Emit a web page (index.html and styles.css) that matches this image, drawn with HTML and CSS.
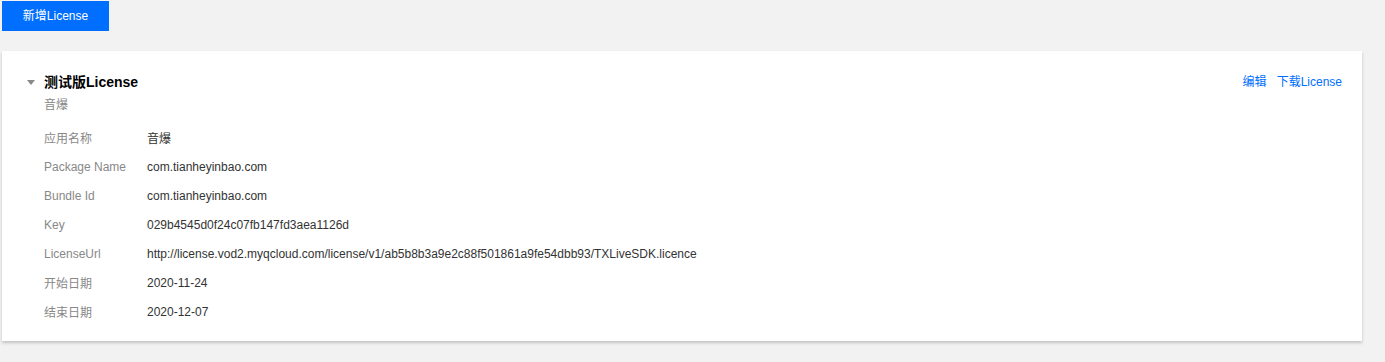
FILE: index.html
```html
<!DOCTYPE html>
<html lang="zh-CN">
<head>
<meta charset="utf-8">
<title>License</title>
<link rel="stylesheet" href="styles.css">
</head>
<body>
<div class="page">
  <div class="toolbar">
    <button class="btn-primary">新增License</button>
  </div>
  <div class="card">
    <div class="card-head">
      <div class="title-wrap">
        <span class="caret"></span>
        <span class="title">测试版License</span>
      </div>
      <div class="actions">
        <a class="link">编辑</a>
        <a class="link">下载License</a>
      </div>
    </div>
    <div class="subtitle">音爆</div>
    <div class="info">
      <div class="row"><span class="label">应用名称</span><span class="value">音爆</span></div>
      <div class="row"><span class="label">Package Name</span><span class="value">com.tianheyinbao.com</span></div>
      <div class="row"><span class="label">Bundle Id</span><span class="value">com.tianheyinbao.com</span></div>
      <div class="row"><span class="label">Key</span><span class="value">029b4545d0f24c07fb147fd3aea1126d</span></div>
      <div class="row"><span class="label">LicenseUrl</span><span class="value">http://license.vod2.myqcloud.com/license/v1/ab5b8b3a9e2c88f501861a9fe54dbb93/TXLiveSDK.licence</span></div>
      <div class="row"><span class="label">开始日期</span><span class="value">2020-11-24</span></div>
      <div class="row"><span class="label">结束日期</span><span class="value">2020-12-07</span></div>
    </div>
  </div>
</div>
</body>
</html>
```

FILE: styles.css
```css
html, body {
  margin: 0;
  padding: 0;
  background: #f2f2f2;
}
body {
  font-family: "Liberation Sans", Arial, "Noto Sans CJK SC", sans-serif;
  font-size: 12px;
  color: #333;
}
.page {
  padding: 1px 23px 20px 2px;
}
.toolbar {
  display: flex;
}
.btn-primary {
  height: 30px;
  width: 107px;
  padding: 1px 0 0;
  border: none;
  background: #006eff;
  color: #fff;
  font-family: inherit;
  font-size: 12px;
  line-height: 29px;
  cursor: pointer;
}
.card {
  margin-top: 20px;
  background: #fff;
  box-shadow: 0 2px 3px rgba(0, 0, 0, 0.2);
  padding: 21px 20px 15px 42px;
}
.card-head {
  display: flex;
  justify-content: space-between;
  align-items: center;
  height: 20px;
}
.title-wrap {
  display: flex;
  align-items: center;
  position: relative;
}
.caret {
  position: absolute;
  left: -17px;
  top: 8px;
  width: 0;
  height: 0;
  border-left: 4px solid transparent;
  border-right: 4px solid transparent;
  border-top: 5px solid #888;
}
.title {
  font-size: 14px;
  font-weight: bold;
  color: #000;
  line-height: 20px;
}
.actions {
  display: flex;
  gap: 10px;
}
.link {
  color: #006eff;
  text-decoration: none;
  line-height: 20px;
  cursor: pointer;
}
.subtitle {
  margin-top: 4px;
  line-height: 18px;
  color: #888;
}
.info {
  margin-top: 9px;
}
.row {
  display: flex;
  height: 29px;
  align-items: center;
}
.label {
  width: 103px;
  flex: none;
  color: #888;
}
.value {
  color: #333;
}
```
